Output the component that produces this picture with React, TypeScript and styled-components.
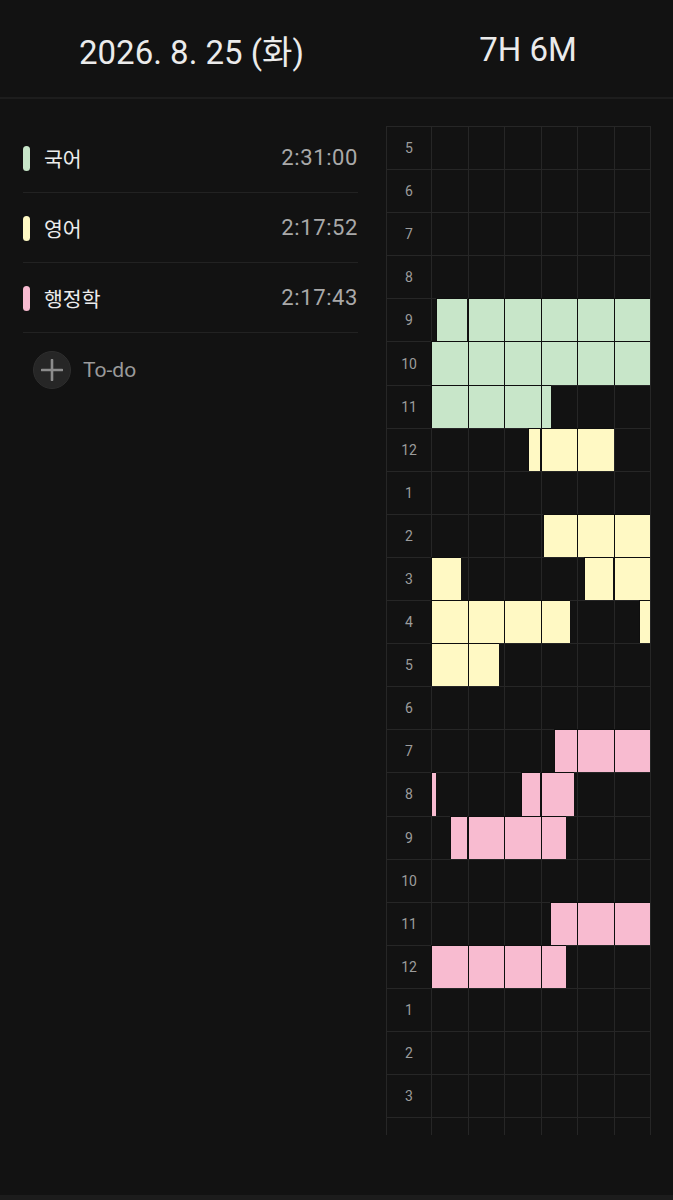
import React from "react";
import styled, { createGlobalStyle } from "styled-components";

const GlobalStyle = createGlobalStyle`
  html, body {
    margin: 0;
    padding: 0;
    background: #121212;
  }
  body {
    font-family: Roboto, "Noto Sans CJK KR", sans-serif;
    color: #e8e8e8;
  }
  * { box-sizing: border-box; }
`;

const COLORS = {
  green: "#c8e6c9",
  yellow: "#fff9c4",
  pink: "#f8bbd0",
};

type Subject = keyof typeof COLORS;

const SUBJECTS: { name: string; time: string; color: Subject }[] = [
  { name: "국어", time: "2:31:00", color: "green" },
  { name: "영어", time: "2:17:52", color: "yellow" },
  { name: "행정학", time: "2:17:43", color: "pink" },
];

// study sessions per hour row, in minutes from the top of the hour
const HOURS: { label: string; sessions: [Subject, number, number][] }[] = [
  { label: "5", sessions: [] },
  { label: "6", sessions: [] },
  { label: "7", sessions: [] },
  { label: "8", sessions: [] },
  { label: "9", sessions: [["green", 1.4, 60]] },
  { label: "10", sessions: [["green", 0, 60]] },
  { label: "11", sessions: [["green", 0, 32.8]] },
  { label: "12", sessions: [["yellow", 26.8, 50]] },
  { label: "1", sessions: [] },
  { label: "2", sessions: [["yellow", 30.8, 60]] },
  { label: "3", sessions: [["yellow", 0, 8.3], ["yellow", 41.9, 60]] },
  { label: "4", sessions: [["yellow", 0, 38], ["yellow", 57.1, 60]] },
  { label: "5", sessions: [["yellow", 0, 18.6]] },
  { label: "6", sessions: [] },
  { label: "7", sessions: [["pink", 33.9, 60]] },
  { label: "8", sessions: [["pink", 0, 1.2], ["pink", 24.8, 39.2]] },
  { label: "9", sessions: [["pink", 5.3, 36.9]] },
  { label: "10", sessions: [] },
  { label: "11", sessions: [["pink", 32.8, 60]] },
  { label: "12", sessions: [["pink", 0, 36.9]] },
  { label: "1", sessions: [] },
  { label: "2", sessions: [] },
  { label: "3", sessions: [] },
];

const Page = styled.div`
  min-height: 1200px;
  display: flex;
  flex-direction: column;
`;

const Header = styled.header`
  display: flex;
  align-items: center;
  height: 99px;
  border-bottom: 2px solid #1d1d1d;
`;

const HeaderCell = styled.div<{ $width: string }>`
  width: ${(p) => p.$width};
  text-align: center;
  font-size: 33px;
  color: #ebebeb;
  padding-top: 2px;
`;

const Main = styled.main`
  display: flex;
  align-items: flex-start;
  padding: 24px 22px 0 23px;
`;

const SubjectPanel = styled.section`
  flex: 1;
  margin-right: 28px;
`;

const SubjectRow = styled.div`
  display: flex;
  align-items: center;
  height: 70px;
  border-bottom: 1px solid #222222;
`;

const ColorBar = styled.span<{ $color: string }>`
  width: 7px;
  height: 25px;
  border-radius: 4px;
  background: ${(p) => p.$color};
  margin-right: 14px;
  margin-top: 1px;
`;

const SubjectName = styled.span`
  flex: 1;
  font-size: 20.5px;
  color: #ececec;
`;

const SubjectTime = styled.span`
  font-size: 22px;
  color: #a9a9a9;
  letter-spacing: 0.6px;
`;

const TodoButton = styled.button`
  display: flex;
  align-items: center;
  gap: 12px;
  margin: 18px 0 0 10px;
  padding: 0;
  border: none;
  background: none;
  font-family: inherit;
  font-size: 21px;
  color: #9a9a9a;
`;

const PlusCircle = styled.span`
  width: 38px;
  height: 38px;
  border-radius: 50%;
  background: #262626;
  border: 1px solid #2e2e2e;
  display: flex;
  align-items: center;
  justify-content: center;
`;

const Timeline = styled.div<{ $rows: number }>`
  width: 265px;
  margin-top: 3px;
  display: grid;
  grid-template-columns: 45px repeat(6, 1fr);
  grid-template-rows: repeat(${(p) => p.$rows}, 43.1px) 18px;
  border-right: 1px solid #262626;
`;

const HourLabel = styled.div`
  border-left: 1px solid #262626;
  border-top: 1px solid #262626;
  display: flex;
  align-items: center;
  justify-content: center;
  font-size: 14px;
  color: #9c9c9c;
`;

const Slot = styled.div`
  position: relative;
  border-left: 1px solid #262626;
  border-top: 1px solid #262626;
`;

const Fill = styled.span<{ $color: string }>`
  position: absolute;
  top: -1px;
  bottom: 0;
  background: ${(p) => p.$color};
  border-top: 1px solid #0e0e0e;
  border-left: 1px solid #0e0e0e;
`;

const TailCell = styled.div`
  border-left: 1px solid #262626;
  border-top: 1px solid #262626;
`;

const TabBarEdge = styled.div`
  margin-top: auto;
  height: 5px;
  background: #1c1c1c;
`;

const PlusIcon = () => (
  <svg width="22" height="22" viewBox="0 0 22 22">
    <path d="M11 1v20M1 11h20" stroke="#8c8c8c" strokeWidth="2.6" strokeLinecap="round" />
  </svg>
);

function slotFills(sessions: [Subject, number, number][], slot: number) {
  const from = slot * 10;
  const to = from + 10;
  return sessions
    .filter(([, s, e]) => s < to && e > from)
    .map(([color, s, e]) => ({
      color,
      start: (Math.max(s, from) - from) / 10,
      end: (Math.min(e, to) - from) / 10,
    }));
}

const App: React.FC = () => {
  return (
    <Page>
      <GlobalStyle />
      <Header>
        <HeaderCell $width="383px">2026. 8. 25 (화)</HeaderCell>
        <HeaderCell $width="290px">7H 6M</HeaderCell>
      </Header>

      <Main>
        <SubjectPanel>
          {SUBJECTS.map((s) => (
            <SubjectRow key={s.name}>
              <ColorBar $color={COLORS[s.color]} />
              <SubjectName>{s.name}</SubjectName>
              <SubjectTime>{s.time}</SubjectTime>
            </SubjectRow>
          ))}
          <TodoButton>
            <PlusCircle>
              <PlusIcon />
            </PlusCircle>
            To-do
          </TodoButton>
        </SubjectPanel>

        <Timeline $rows={HOURS.length}>
          {HOURS.map((h, i) => (
            <React.Fragment key={i}>
              <HourLabel>{h.label}</HourLabel>
              {[0, 1, 2, 3, 4, 5].map((slot) => (
                <Slot key={slot}>
                  {slotFills(h.sessions, slot).map((f, j) => (
                    <Fill
                      key={j}
                      $color={COLORS[f.color]}
                      style={{
                        left: `calc(${f.start * 100}% - 1px)`,
                        width: `calc(${(f.end - f.start) * 100}% + 1px)`,
                      }}
                    />
                  ))}
                </Slot>
              ))}
            </React.Fragment>
          ))}
          {[0, 1, 2, 3, 4, 5, 6].map((c) => (
            <TailCell key={c} />
          ))}
        </Timeline>
      </Main>

      <TabBarEdge />
    </Page>
  );
};

export default App;
